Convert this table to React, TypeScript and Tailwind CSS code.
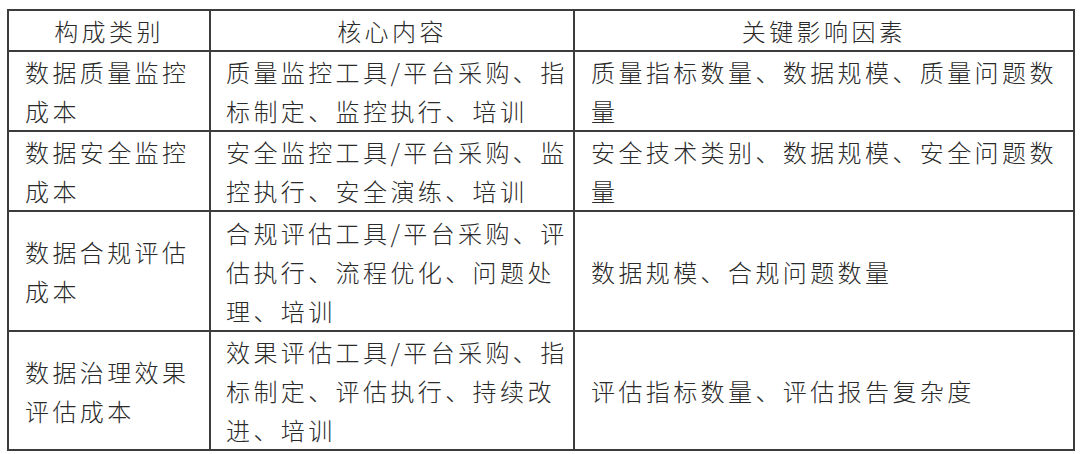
const rows: { cat: string[]; content: string[]; factors: string[] }[] = [
  {
    cat: ["数据质量监控", "成本"],
    content: ["质量监控工具/平台采购、指", "标制定、监控执行、培训"],
    factors: ["质量指标数量、数据规模、质量问题数", "量"],
  },
  {
    cat: ["数据安全监控", "成本"],
    content: ["安全监控工具/平台采购、监", "控执行、安全演练、培训"],
    factors: ["安全技术类别、数据规模、安全问题数", "量"],
  },
  {
    cat: ["数据合规评估", "成本"],
    content: ["合规评估工具/平台采购、评", "估执行、流程优化、问题处", "理、培训"],
    factors: ["数据规模、合规问题数量"],
  },
  {
    cat: ["数据治理效果", "评估成本"],
    content: ["效果评估工具/平台采购、指", "标制定、评估执行、持续改", "进、培训"],
    factors: ["评估指标数量、评估报告复杂度"],
  },
];

const rowHeights = ["h-[80px]", "h-[78px]", "h-[120px]", "h-[118px]"];

function Lines({ lines }: { lines: string[] }) {
  return (
    <>
      {lines.map((line, i) => (
        <div key={i} className="whitespace-nowrap">
          {line}
        </div>
      ))}
    </>
  );
}

export default function App() {
  return (
    <div className="h-[454px] w-[1080px] overflow-hidden bg-white pl-[7px] pt-[9px]">
      <table
        className="w-[1066px] table-fixed border-collapse text-[24px] leading-[39px] tracking-[3.4px] text-[#2a2a2a]"
        style={{ fontFamily: '"Noto Sans CJK SC", sans-serif' }}
      >
        <colgroup>
          <col className="w-[202px]" />
          <col className="w-[364px]" />
          <col className="w-[500px]" />
        </colgroup>
        <thead>
          <tr className="h-[40px]">
            <th className="border-2 border-[#3c3c3c] p-0 text-center font-light">构成类别</th>
            <th className="border-2 border-[#3c3c3c] p-0 text-center font-light">核心内容</th>
            <th className="border-2 border-[#3c3c3c] p-0 text-center font-light">关键影响因素</th>
          </tr>
        </thead>
        <tbody>
          {rows.map((row, i) => (
            <tr key={i} className={rowHeights[i]}>
              <td className="border-2 border-[#3c3c3c] py-0 pl-[16px] pr-0 align-middle font-light">
                <Lines lines={row.cat} />
              </td>
              <td className="border-2 border-[#3c3c3c] py-0 pl-[15px] pr-0 align-middle font-light">
                <Lines lines={row.content} />
              </td>
              <td className="border-2 border-[#3c3c3c] py-0 pl-[16px] pr-0 align-middle font-light">
                <Lines lines={row.factors} />
              </td>
            </tr>
          ))}
        </tbody>
      </table>
    </div>
  );
}
